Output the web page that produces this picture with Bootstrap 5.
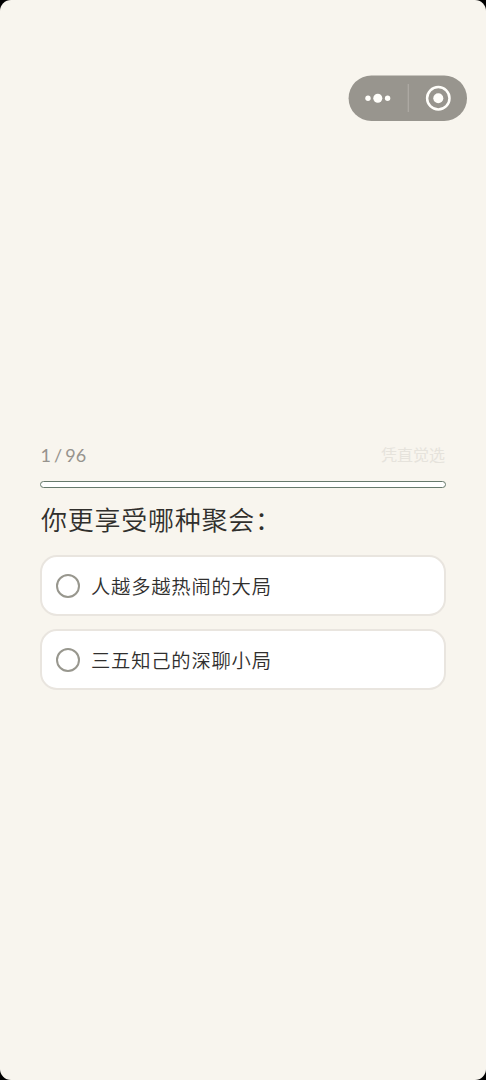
<!DOCTYPE html>
<html lang="zh-CN">
<head>
<meta charset="utf-8">
<meta name="viewport" content="width=device-width, initial-scale=1">
<title>1 / 96</title>
<link href="https://cdn.jsdelivr.net/npm/bootstrap@5.3.0/dist/css/bootstrap.min.css" rel="stylesheet">
<style>
html{background:#000}
body{background:#000;font-family:"Noto Sans","Noto Sans CJK SC",sans-serif;color:#302f2c}
.screen{height:1080px;background:#f8f5ee;border-radius:11px;padding:75px 19px 0}
.capsule{width:119px;height:46px}
.quiz{margin:324px 21px 0 21px}
.meta-row{height:20px;line-height:20px}
.count{font-family:Lato,sans-serif;font-size:18px;font-weight:400;word-spacing:-1.5px;color:#96938d;padding-left:.5px}
.hint{font-family:"Noto Sans CJK SC",sans-serif;font-size:16px;line-height:18px;padding-bottom:2px;padding-right:1px;color:#e6e3dc}
.progress.track{height:7px;margin-top:16px;border:1px solid #66796b;border-radius:4px;background:#fff}
.question{font-family:"Noto Sans CJK SC",sans-serif;font-size:26px;letter-spacing:.75px;line-height:36px;font-weight:350;margin:13px 0 18px;padding-left:1px}
.options{gap:13px}
.option{height:61px;border:2px solid #e9e5df;border-radius:17px;background:#fff;padding:0 14px;gap:11px;font-family:"Noto Sans CJK SC",sans-serif;font-size:19.3px;font-weight:350;letter-spacing:.8px;line-height:28px;color:#302f2e}
.ring{width:24px;height:24px;border:2px solid #98978e}
</style>
</head>
<body>
<main class="screen overflow-hidden">
  <div class="d-flex justify-content-end">
    <div class="capsule">
      <svg class="d-block" width="119" height="46" viewBox="0 0 119 46" fill="#fffefa">
        <rect x=".6" y=".4" width="118.4" height="45.6" rx="22.8" fill="#98958e"/>
        <circle cx="20" cy="23.3" r="2.7"/><circle cx="29.8" cy="23.3" r="4.5"/><circle cx="39.6" cy="23.3" r="2.7"/>
        <path d="M60.3 9v28" stroke="#aeaba5" stroke-width="1.2"/>
        <circle cx="90.3" cy="23.2" r="11.2" fill="none" stroke="#fffefa" stroke-width="2.5"/>
        <circle cx="90.3" cy="23.2" r="5"/>
      </svg>
    </div>
  </div>
  <section class="quiz">
    <div class="meta-row d-flex justify-content-between align-items-center">
      <span class="count">1 / 96</span>
      <span class="hint">凭直觉选</span>
    </div>
    <div class="progress track" role="progressbar" aria-valuenow="0" aria-valuemin="0" aria-valuemax="96"></div>
    <h1 class="question">你更享受哪种聚会：</h1>
    <div class="options d-flex flex-column">
      <div class="option d-flex align-items-center"><span class="ring rounded-circle flex-shrink-0"></span><span>人越多越热闹的大局</span></div>
      <div class="option d-flex align-items-center"><span class="ring rounded-circle flex-shrink-0"></span><span>三五知己的深聊小局</span></div>
    </div>
  </section>
</main>
<script src="https://cdn.jsdelivr.net/npm/bootstrap@5.3.0/dist/js/bootstrap.bundle.min.js"></script>
</body>
</html>
